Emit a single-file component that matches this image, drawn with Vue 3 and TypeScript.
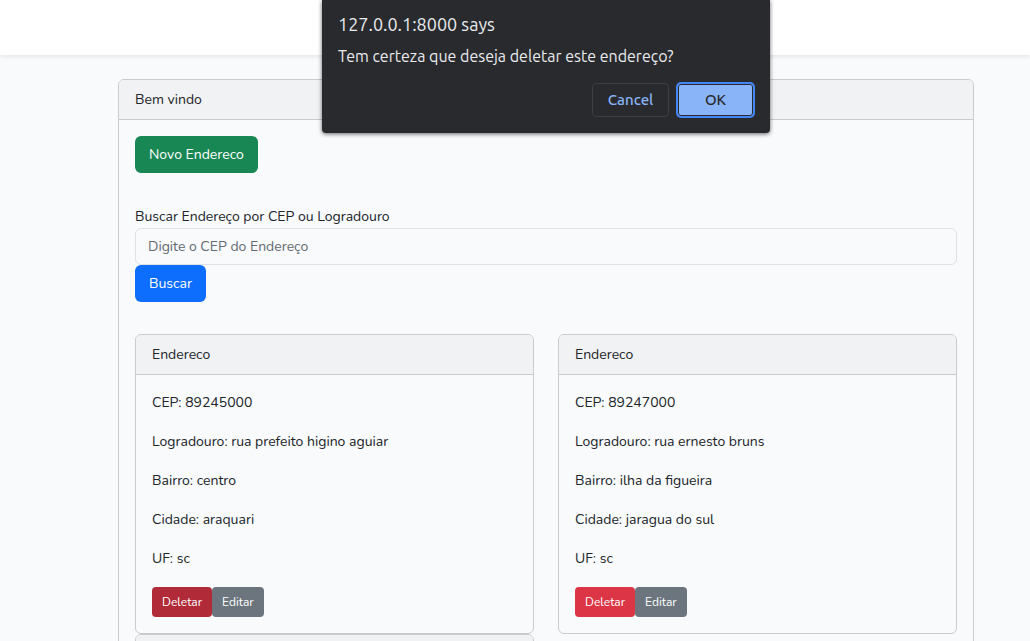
<script setup lang="ts">
import { ref } from 'vue'

interface Endereco {
  id: number
  campos: { rotulo: string; valor: string }[]
}

const busca = ref('')
const selecionado = ref(1)

const enderecos: Endereco[] = [
  {
    id: 1,
    campos: [
      { rotulo: 'CEP', valor: '89245000' },
      { rotulo: 'Logradouro', valor: 'rua prefeito higino aguiar' },
      { rotulo: 'Bairro', valor: 'centro' },
      { rotulo: 'Cidade', valor: 'araquari' },
      { rotulo: 'UF', valor: 'sc' },
    ],
  },
  {
    id: 2,
    campos: [
      { rotulo: 'CEP', valor: '89247000' },
      { rotulo: 'Logradouro', valor: 'rua ernesto bruns' },
      { rotulo: 'Bairro', valor: 'ilha da figueira' },
      { rotulo: 'Cidade', valor: 'jaragua do sul' },
      { rotulo: 'UF', valor: 'sc' },
    ],
  },
]
</script>

<template>
  <div class="page">
    <nav class="navbar"></nav>
    <main class="content">
      <section class="card">
        <header class="card-header">Bem vindo</header>
        <div class="card-body">
          <button type="button" class="btn btn-success">Novo Endereco</button>
          <form class="search" @submit.prevent>
            <label for="busca">Buscar Endereço por CEP ou Logradouro</label>
            <input id="busca" v-model="busca" type="text" placeholder="Digite o CEP do Endereço" />
            <button type="submit" class="btn btn-primary">Buscar</button>
          </form>
          <div class="grid">
            <article v-for="e in enderecos" :key="e.id" class="card">
              <header class="card-header">Endereco</header>
              <div class="card-body">
                <p v-for="c in e.campos" :key="c.rotulo">{{ c.rotulo }}: {{ c.valor }}</p>
                <div class="actions">
                  <button
                    type="button"
                    class="btn btn-sm btn-danger"
                    :class="{ active: selecionado === e.id }"
                    @click="selecionado = e.id"
                  >Deletar</button>
                  <button type="button" class="btn btn-sm btn-secondary">Editar</button>
                </div>
              </div>
            </article>
            <article class="card">
              <header class="card-header next"></header>
            </article>
          </div>
        </div>
      </section>
    </main>

    <div class="dialog" role="alertdialog" aria-labelledby="dlg-title" aria-describedby="dlg-text">
      <h1 id="dlg-title">127.0.0.1:8000 says</h1>
      <p id="dlg-text">Tem certeza que deseja deletar este endereço?</p>
      <div class="dialog-actions">
        <button type="button" class="dlg-btn">Cancel</button>
        <button type="button" class="dlg-btn ok">OK</button>
      </div>
    </div>
  </div>
</template>

<style>
html,
body {
  margin: 0;
  background: #f8fafc;
  overflow: hidden;
}
</style>

<style scoped>
* {
  box-sizing: border-box;
}

.page {
  position: relative;
  height: 100vh;
  overflow: hidden;
  background: #f8fafc;
  color: #212529;
  font-family: Nunito, "Noto Sans", sans-serif;
  font-size: 14px;
  line-height: 23px;
}

.navbar {
  height: 55px;
  background: #fff;
  box-shadow: 0 2px 4px rgba(0, 0, 0, 0.075);
}

.content {
  padding: 24px 56px 24px 118px;
}

.card {
  border: 1px solid #c9cbcd;
  border-radius: 6px;
  overflow: hidden;
}

.card-header {
  padding: 8px 16px;
  background: #f1f2f4;
  border-bottom: 1px solid #c9cbcd;
}

.card-header.next {
  height: 40px;
}

.card-body {
  padding: 16px;
}

.card-body p {
  margin: 0 0 16px;
}

.btn {
  display: block;
  padding: 6px 13px;
  border: 1px solid transparent;
  border-radius: 6px;
  color: #fff;
  font: inherit;
  white-space: nowrap;
}

.btn-success {
  background: #198754;
}

.btn-primary {
  background: #0d6efd;
}

.btn-danger {
  background: #dc3545;
}

.btn-danger.active {
  background: #b02a37;
}

.btn-secondary {
  background: #6c757d;
}

.btn-sm {
  padding: 4px 9px;
  border-radius: 4px;
  font-size: 12px;
  line-height: 20px;
}

.search {
  margin: 32px 0;
}

.search label {
  display: block;
}

.search input {
  display: block;
  width: 100%;
  height: 37px;
  padding: 6px 12px;
  border: 1px solid #dee2e6;
  border-radius: 6px;
  background: #f8fafc;
  color: inherit;
  font: inherit;
}

.search input::placeholder {
  color: #646a70;
  opacity: 1;
}

.grid {
  display: grid;
  grid-template-columns: 1fr 1fr;
  column-gap: 24px;
}

.actions {
  display: flex;
  padding-top: 1px;
}

.dialog {
  position: absolute;
  top: 0;
  left: 322px;
  width: 448px;
  padding: 12px 16px 16px;
  border-radius: 0 0 4px 4px;
  background: #292a2d;
  box-shadow: 0 1px 4px rgba(0, 0, 0, 0.6);
  color: #e8eaed;
  font-family: Ubuntu, "Noto Sans", sans-serif;
}

.dialog h1 {
  margin: 0;
  font-size: 18px;
  font-weight: 400;
  line-height: 24px;
}

.dialog p {
  margin: 8px 0 15px;
  font-size: 16px;
  line-height: 24px;
}

.dialog-actions {
  display: flex;
  justify-content: flex-end;
  gap: 8px;
}

.dlg-btn {
  width: 77px;
  height: 34px;
  padding: 0;
  border: 1px solid #3c4043;
  border-radius: 4px;
  background: #292a2d;
  color: #8ab4f8;
  font: 500 15px/20px Ubuntu, "Noto Sans", sans-serif;
}

.dlg-btn.ok {
  border-color: #4285f4;
  background: #8ab4f8;
  color: #292a2d;
  box-shadow: 0 0 0 1px #4285f4, inset 0 0 0 1px #292a2d;
}
</style>
